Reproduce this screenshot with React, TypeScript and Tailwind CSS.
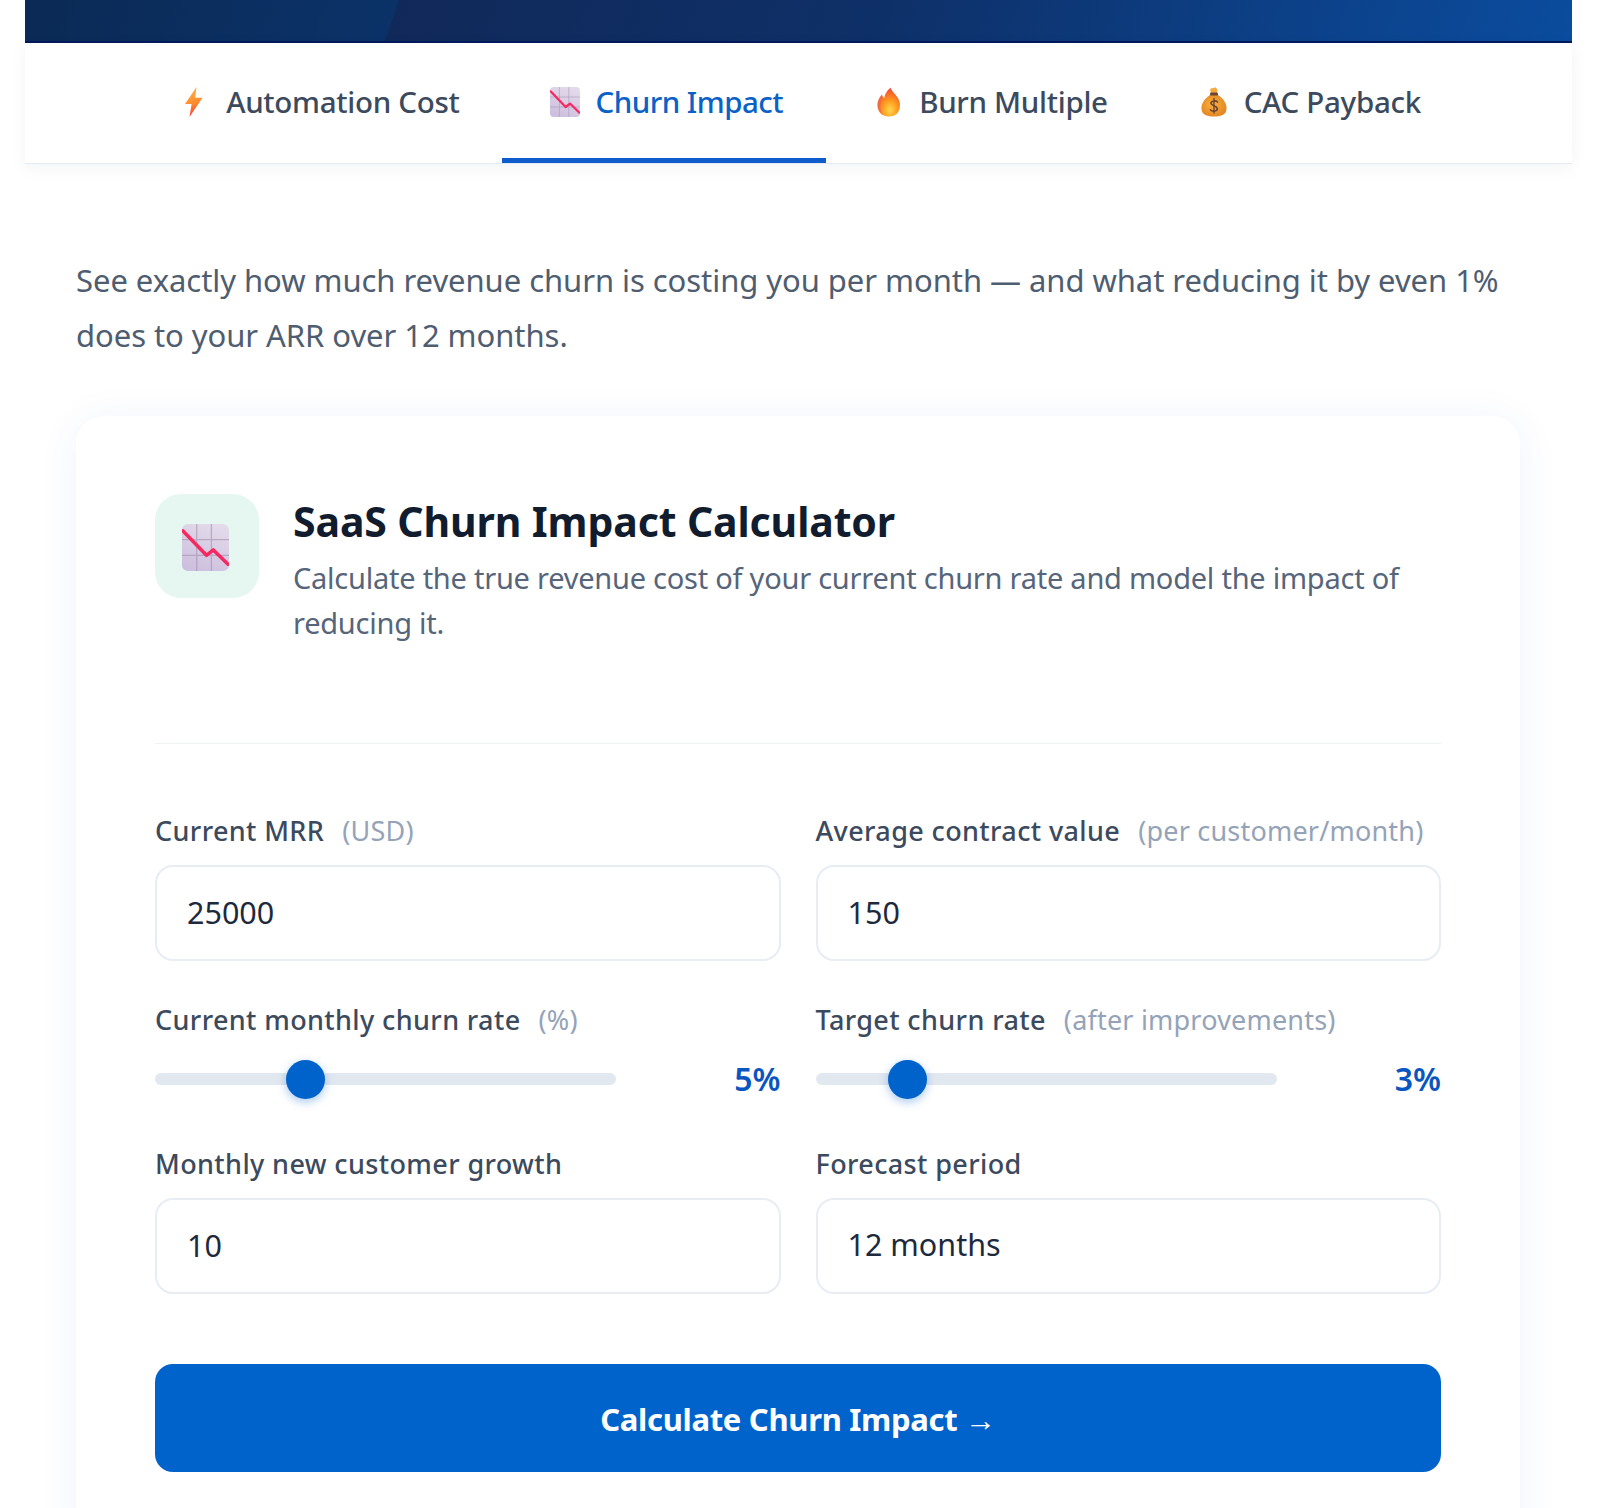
import React from "react";

function Bolt() {
  return (
    <svg viewBox="0 0 40 40" className="w-[40px] h-[40px]" aria-hidden="true">
      <defs>
        <linearGradient id="boltG" x1="0.4" y1="0" x2="0.6" y2="1">
          <stop offset="0" stopColor="#ffb347" />
          <stop offset="0.55" stopColor="#ff8a2e" />
          <stop offset="1" stopColor="#f4303a" />
        </linearGradient>
      </defs>
      <path d="M20.5 5 L9 22 L15.6 22 L13.5 35 L26.5 15.8 L19.2 15.8 Z" fill="url(#boltG)" />
    </svg>
  );
}

function ChartDown({ size, id }: { size: string; id: string }) {
  return (
    <svg viewBox="0 0 48 48" className={size} aria-hidden="true">
      <defs>
        <linearGradient id={id} x1="0.7" y1="0" x2="0.3" y2="1">
          <stop offset="0" stopColor="#e3dbea" />
          <stop offset="1" stopColor="#cdbfde" />
        </linearGradient>
      </defs>
      <rect x="0" y="0" width="48" height="48" rx="6" fill={`url(#${id})`} />
      <path d="M15 0V48M30 0V48M0 16H48M0 32H48" stroke="#a898b4" strokeOpacity="0.7" strokeWidth="1.3" fill="none" />
      <path d="M1 7 L25 32 L32 26.5 L47 41" stroke="#f5295f" strokeWidth="3.6" strokeLinejoin="round" strokeLinecap="round" fill="none" />
    </svg>
  );
}

function Flame() {
  return (
    <svg viewBox="0 0 40 40" className="w-[40px] h-[40px]" aria-hidden="true">
      <defs>
        <radialGradient id="flameG" cx="0.55" cy="0.78" r="0.75">
          <stop offset="0" stopColor="#ffd84d" />
          <stop offset="0.45" stopColor="#ff9a1f" />
          <stop offset="1" stopColor="#f0492f" />
        </radialGradient>
      </defs>
      <path
        d="M21.5 5.5 C22.5 9.5 27 12 29.5 17 C32.5 23 31.5 34.5 20 34.5 C9.5 34.5 7.5 25 9 19.5 C10 16 11.5 14.5 13 12.5 C13.5 14.5 14 15.5 15.5 16 C15.5 12 18.5 8.5 21.5 5.5 Z"
        fill="url(#flameG)"
      />
      <path d="M13 12.5 C11.5 14.5 10 16 9 19.5 C8 23.5 9 29 13 32 C10.5 26 11.5 19 13 12.5 Z" fill="#e9694d" opacity="0.7" />
    </svg>
  );
}

function MoneyBag() {
  return (
    <svg viewBox="0 0 40 40" className="w-[40px] h-[40px]" aria-hidden="true">
      <defs>
        <radialGradient id="bagG" cx="0.45" cy="0.45" r="0.7">
          <stop offset="0" stopColor="#f9b13c" />
          <stop offset="1" stopColor="#e07c1e" />
        </radialGradient>
      </defs>
      <path d="M17 6 C18.5 7 20 5 21.5 5.5 C23.5 6.5 24 9 22.5 11.5 L17.5 11.5 C16.5 10 15.5 8 17 6 Z" fill="#f6a93b" />
      <path d="M16 13 C10 17 7 22 7.5 27 C8 32.5 12 34.5 20 34.5 C28 34.5 32 32.5 32.5 27 C33 22 30 17 24 13 Z" fill="url(#bagG)" />
      <rect x="16" y="10.5" width="8" height="3" rx="1" fill="#6e4630" />
      <path d="M23.5 20 C22 18.5 17.5 18.5 17 21 C16.5 24 23.5 23.5 23.3 27 C23 29.7 18 29.7 16.5 28" stroke="#6e4630" strokeWidth="1.7" fill="none" strokeLinecap="round" />
      <path d="M20 16.5V31" stroke="#6e4630" strokeWidth="1.4" fill="none" strokeLinecap="round" />
    </svg>
  );
}

function Tab({ icon, label, active }: { icon: React.ReactNode; label: string; active?: boolean }) {
  return (
    <button
      type="button"
      className={
        "h-[120px] px-[43px] pt-[2px] flex items-center gap-[10px] border-b-[5px] text-[29.5px] font-medium leading-none " +
        (active ? "tracking-[-0.5px] border-[#0f5ccc] text-[#0a62c8]" : "tracking-[-0.3px] border-transparent text-[#3c4a5e]")
      }
    >
      <span className="w-[40px] h-[40px] flex items-center justify-center shrink-0">{icon}</span>
      {label}
    </button>
  );
}

function Label({ text, hint }: { text: string; hint?: string }) {
  return (
    <label className="block h-[34px] leading-[33px] text-[27px] font-medium tracking-[0.38px] text-[#3c4a5e] whitespace-nowrap">
      {text}
      {hint ? <span className="ml-[18px] font-normal tracking-[0.2px] text-[#94a3b8]">{hint}</span> : null}
    </label>
  );
}

const fieldClass =
  "mt-[17px] block w-full h-[96px] rounded-[18px] border-2 border-[#e8edf4] bg-white pl-[30px] pr-[20px] pb-[3px] text-[30.5px] text-[#1d2a3d] outline-none appearance-none";

function Slider({ label, hint, value }: { label: string; hint: string; value: number }) {
  return (
    <div className="pb-[6px]">
      <Label text={label} hint={hint} />
      <div className="mt-[22px] h-[40px] flex items-center justify-between">
        <input
          type="range"
          min={0.5}
          max={15}
          step={0.5}
          defaultValue={value}
          className="w-[461px] h-[12px] rounded-full bg-[#e2e8f0] appearance-none outline-none [&::-webkit-slider-thumb]:appearance-none [&::-webkit-slider-thumb]:w-[39px] [&::-webkit-slider-thumb]:h-[39px] [&::-webkit-slider-thumb]:rounded-full [&::-webkit-slider-thumb]:bg-[#0063cc] [&::-webkit-slider-thumb]:shadow-[0_3px_10px_rgba(0,99,204,0.35)]"
        />
        <span className="text-[32px] font-semibold text-[#0a55c0] leading-none">{value}%</span>
      </div>
    </div>
  );
}

export default function App() {
  return (
    <div className="h-[1508px] overflow-hidden bg-white font-['Noto_Sans','Liberation_Sans',sans-serif]">
      <div className="ml-[25px] w-[1547px]">
        <div className="h-[43px] border-b-2 border-[#001a5e] bg-[linear-gradient(109deg,#0b2a55_0%,#0b3268_23.9%,#11295a_24%,#0e3068_55%,#0b4c9e_100%)]" />
        <nav className="h-[121px] flex justify-center bg-white border-b border-[#e4eaf2] shadow-[0_4px_16px_rgba(20,40,80,0.05)]">
          <Tab icon={<Bolt />} label="Automation Cost" />
          <Tab icon={<ChartDown size="w-[30px] h-[30px]" id="chartTab" />} label="Churn Impact" active />
          <Tab icon={<Flame />} label="Burn Multiple" />
          <Tab icon={<MoneyBag />} label="CAC Payback" />
        </nav>
        <main className="pl-[51px] pr-[52px] pt-[89px]">
          <p className="text-[31px] leading-[55px] tracking-[-0.055px] text-[#4f5d70]">
            See exactly how much revenue churn is costing you per month — and what reducing it by even 1% does to your ARR over 12 months.
          </p>
          <section className="mt-[53px] rounded-[28px] bg-white px-[79px] pt-[78px] pb-[80px] shadow-[0_4px_40px_rgba(40,90,200,0.07)]">
            <header className="flex gap-[34px] pb-[98px] border-b border-[#eef2f6]">
              <div className="w-[104px] h-[104px] rounded-[26px] bg-[#e5f7f0] flex items-center justify-center shrink-0">
                <ChartDown size="w-[47px] h-[49px] mr-[4px] mt-[2px]" id="chartCard" />
              </div>
              <div>
                <h2 className="text-[41px] leading-[54px] font-bold tracking-[-0.13px] text-[#111c2e]">SaaS Churn Impact Calculator</h2>
                <p className="mt-[7px] text-[29px] leading-[45px] tracking-[-0.24px] text-[#56657a]">
                  Calculate the true revenue cost of your current churn rate and model the impact of reducing it.
                </p>
              </div>
            </header>
            <div className="mt-[70px] grid grid-cols-2 gap-x-[35px] gap-y-[42px]">
              <div>
                <Label text="Current MRR" hint="(USD)" />
                <input type="number" defaultValue={25000} className={fieldClass} />
              </div>
              <div>
                <Label text="Average contract value" hint="(per customer/month)" />
                <input type="number" defaultValue={150} className={fieldClass} />
              </div>
              <Slider label="Current monthly churn rate" hint="(%)" value={5} />
              <Slider label="Target churn rate" hint="(after improvements)" value={3} />
              <div>
                <Label text="Monthly new customer growth" />
                <input type="number" defaultValue={10} className={fieldClass} />
              </div>
              <div>
                <Label text="Forecast period" />
                <select defaultValue="12" className={fieldClass}>
                  <option value="12">12 months</option>
                </select>
              </div>
            </div>
            <button
              type="button"
              className="mt-[70px] w-full h-[108px] pt-[3px] rounded-[18px] bg-[#0063cc] text-white text-[31px] font-bold tracking-[-0.3px]"
            >
              Calculate Churn Impact →
            </button>
          </section>
        </main>
      </div>
    </div>
  );
}
